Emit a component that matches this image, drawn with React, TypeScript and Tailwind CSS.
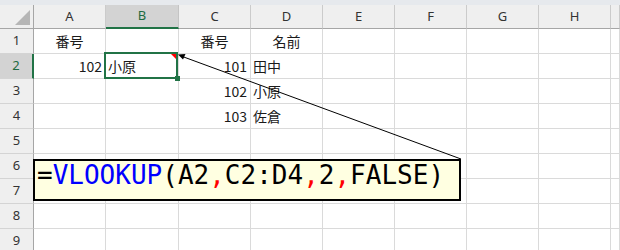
import React from "react";

const cols = ["A", "B", "C", "D", "E", "F", "G", "H", ""];
type Cell = { t: string; a: "l" | "r" | "c" };
const data: Record<string, Cell> = {
  "1A": { t: "番号", a: "c" },
  "1C": { t: "番号", a: "c" },
  "1D": { t: "名前", a: "c" },
  "2A": { t: "102", a: "r" },
  "2B": { t: "小原", a: "l" },
  "2C": { t: "101", a: "r" },
  "2D": { t: "田中", a: "l" },
  "3C": { t: "102", a: "r" },
  "3D": { t: "小原", a: "l" },
  "4C": { t: "103", a: "r" },
  "4D": { t: "佐倉", a: "l" },
};

const gridCols =
  "grid grid-cols-[34px_72px_73px_72px_72px_72px_72px_72px_72px_1fr]";

export default function App() {
  const rows = [1, 2, 3, 4, 5, 6, 7, 8, 9];
  return (
    <div className="relative w-[620px] h-[250px] overflow-hidden bg-white">
      <div className="h-[5px] bg-[#e6e9ed]" />
      <div className={gridCols}>
        {/* header row */}
        <div className="relative h-[24px] bg-[#efefef] border-r border-b border-[#a6a6a6]">
          <div className="absolute left-[15px] top-[5px] w-0 h-0 border-l-[15px] border-l-transparent border-b-[15px] border-b-[#b6b6b6]" />
        </div>
        {cols.map((c, i) => {
          const sel = c === "B";
          return (
            <div
              key={i}
              className={
                "h-[24px] flex items-center justify-center text-[13px] border-r " +
                (sel
                  ? "bg-[#d3d3d3] text-[#1e6b41] border-b-2 border-b-[#217346] border-r-[#c4c4c4]"
                  : "bg-[#efefef] text-[#333] border-b border-b-[#a6a6a6] border-r-[#cbcbcb]")
              }
              style={{ fontFamily: '"Noto Sans", "Liberation Sans", sans-serif' }}
            >
              {c}
            </div>
          );
        })}
        {rows.map((r) => (
          <React.Fragment key={r}>
            <div
              className={
                "h-[25px] flex items-center justify-center text-[13px] border-b border-b-[#d4d4d4] " +
                (r === 2
                  ? "bg-[#d3d3d3] text-[#1e6b41] border-r-2 border-r-[#217346]"
                  : "bg-[#efefef] text-[#333] border-r border-r-[#a6a6a6]")
              }
              style={{ fontFamily: '"Noto Sans", "Liberation Sans", sans-serif' }}
            >
              {r}
            </div>
            {cols.map((c, i) => {
              const cell = data[`${r}${c}`];
              return (
                <div
                  key={i}
                  className={
                    "h-[25px] flex items-center border-r border-b border-[#dadada] text-[14px] text-[#1a1a1a] whitespace-nowrap " +
                    (cell
                      ? cell.a === "r"
                        ? "justify-end pr-[3px]"
                        : cell.a === "c"
                        ? "justify-center"
                        : "justify-start pl-[2px]"
                      : "")
                  }
                  style={{ fontFamily: '"Noto Sans CJK JP", sans-serif' }}
                >
                  {cell ? cell.t : ""}
                </div>
              );
            })}
          </React.Fragment>
        ))}
      </div>

      {/* selection */}
      <div className="absolute left-[104px] top-[52px] w-[74px] h-[27px] border-2 border-[#217346]" />
      <div className="absolute left-[175px] top-[76px] w-[5px] h-[5px] bg-[#217346]" />
      {/* comment indicator */}
      <div className="absolute left-[171px] top-[54px] w-0 h-0 border-l-[5px] border-l-transparent border-t-[5px] border-t-[#ff0000]" />

      {/* arrow */}
      <svg
        className="absolute left-0 top-0"
        width={620}
        height={250}
        viewBox="0 0 620 250"
      >
        <line x1={461} y1={159} x2={181} y2={56} stroke="#000" strokeWidth={1} />
        <polygon points="178,54.5 183,59.5 185.5,54" fill="#000" />
      </svg>

      {/* comment box */}
      <div
        className="absolute left-[33px] top-[159px] w-[428px] h-[42px] border-2 border-black bg-[#ffffe1] pl-[2px] pt-[1px] text-[26px] leading-[26px] whitespace-nowrap text-black"
        style={{ fontFamily: '"DejaVu Sans Mono", "Liberation Mono", monospace' }}
      >
        <span>=</span>
        <span className="text-[#0000ff]">VLOOKUP</span>
        <span>(A2</span>
        <span className="text-[#ff0000]">,</span>
        <span>C2:D4</span>
        <span className="text-[#ff0000]">,</span>
        <span>2</span>
        <span className="text-[#ff0000]">,</span>
        <span>FALSE)</span>
      </div>
    </div>
  );
}
